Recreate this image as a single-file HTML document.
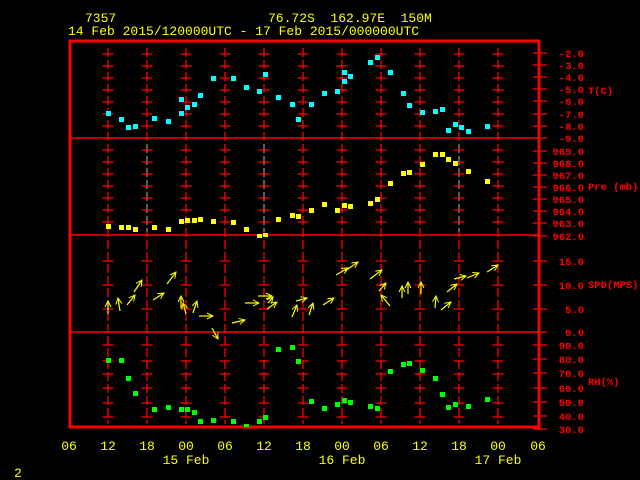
<!DOCTYPE html>
<html><head><style>
html,body{margin:0;padding:0;background:#000;width:640px;height:480px;overflow:hidden}
svg{display:block}
text{font-family:"Liberation Mono",monospace;font-size:13px}
.y{fill:#ffff00}.r{fill:#ff0000}
.s{font-size:10.5px;font-weight:bold}
</style></head><body>
<svg width="640" height="480" xmlns="http://www.w3.org/2000/svg">
<defs>
<marker id="ah" markerWidth="8" markerHeight="8" refX="7" refY="4" orient="auto" markerUnits="userSpaceOnUse">
<path d="M1,1 L7,4 L1,7" fill="none" stroke="#ffff00" stroke-width="1"/>
</marker>
</defs>
<!-- header -->
<text x="85" y="22" class="y">7357</text>
<text x="268" y="22" class="y" xml:space="preserve">76.72S  162.97E  150M</text>
<text x="68" y="35" class="y">14 Feb 2015/120000UTC - 17 Feb 2015/000000UTC</text>

<!-- vertical grid -->
<g stroke="#ff0000" stroke-width="1.3" stroke-dasharray="9,3">
<line x1="108" y1="48" x2="108" y2="424"/><line x1="147" y1="48" x2="147" y2="424"/>
<line x1="186" y1="48" x2="186" y2="424"/><line x1="225" y1="48" x2="225" y2="424"/>
<line x1="264" y1="48" x2="264" y2="424"/><line x1="303" y1="48" x2="303" y2="424"/>
<line x1="342" y1="48" x2="342" y2="424"/><line x1="381" y1="48" x2="381" y2="424"/>
<line x1="420" y1="48" x2="420" y2="424"/><line x1="459" y1="48" x2="459" y2="424"/>
<line x1="498" y1="48" x2="498" y2="424"/>
</g>
<g stroke="#808080" stroke-width="1.3" stroke-dasharray="9,3">
<line x1="147" y1="144" x2="147" y2="232"/><line x1="264" y1="144" x2="264" y2="232"/>
<line x1="459" y1="144" x2="459" y2="232"/>
</g>
<!-- cross ticks -->
<g stroke="#ff0000" stroke-width="1.3" stroke-dasharray="11,28">
<line x1="102.5" x2="510" y1="54" y2="54"/><line x1="102.5" x2="510" y1="66" y2="66"/>
<line x1="102.5" x2="510" y1="78" y2="78"/><line x1="102.5" x2="510" y1="90" y2="90"/>
<line x1="102.5" x2="510" y1="102" y2="102"/><line x1="102.5" x2="510" y1="114" y2="114"/>
<line x1="102.5" x2="510" y1="126" y2="126"/>
<line x1="102.5" x2="510" y1="150" y2="150"/><line x1="102.5" x2="510" y1="162" y2="162"/>
<line x1="102.5" x2="510" y1="174" y2="174"/><line x1="102.5" x2="510" y1="186" y2="186"/>
<line x1="102.5" x2="510" y1="198" y2="198"/><line x1="102.5" x2="510" y1="210" y2="210"/>
<line x1="102.5" x2="510" y1="222" y2="222"/>
<line x1="102.5" x2="510" y1="261" y2="261"/><line x1="102.5" x2="510" y1="285" y2="285"/>
<line x1="102.5" x2="510" y1="309" y2="309"/>
<line x1="102.5" x2="510" y1="345" y2="345"/><line x1="102.5" x2="510" y1="361" y2="361"/>
<line x1="102.5" x2="510" y1="374" y2="374"/><line x1="102.5" x2="510" y1="388" y2="388"/>
<line x1="102.5" x2="510" y1="403" y2="403"/><line x1="102.5" x2="510" y1="417" y2="417"/>
</g>
<!-- frame -->
<g stroke="#ff0000">
<rect x="70" y="41" width="469" height="386" fill="none" stroke-width="3"/>
<line x1="70" y1="138" x2="539" y2="138" stroke-width="1.5"/>
<line x1="70" y1="235" x2="539" y2="235" stroke-width="1.5"/>
<line x1="70" y1="332" x2="539" y2="332" stroke-width="1.5"/>
<line x1="539" y1="41" x2="539" y2="430" stroke-width="3"/>
</g>
<g stroke="#ff0000" stroke-width="1.3">
<line x1="533" x2="547" y1="53" y2="53"/><line x1="533" x2="547" y1="65" y2="65"/><line x1="533" x2="547" y1="77" y2="77"/><line x1="533" x2="547" y1="89" y2="89"/><line x1="533" x2="547" y1="101" y2="101"/><line x1="533" x2="547" y1="114" y2="114"/><line x1="533" x2="547" y1="126" y2="126"/><line x1="533" x2="547" y1="138" y2="138"/>
<line x1="533" x2="547" y1="151" y2="151"/><line x1="533" x2="547" y1="163" y2="163"/><line x1="533" x2="547" y1="175" y2="175"/><line x1="533" x2="547" y1="187" y2="187"/><line x1="533" x2="547" y1="199" y2="199"/><line x1="533" x2="547" y1="211" y2="211"/><line x1="533" x2="547" y1="223" y2="223"/><line x1="533" x2="547" y1="236" y2="236"/>
<line x1="533" x2="547" y1="261" y2="261"/><line x1="533" x2="547" y1="285" y2="285"/><line x1="533" x2="547" y1="309" y2="309"/><line x1="533" x2="547" y1="332" y2="332"/>
<line x1="533" x2="547" y1="345" y2="345"/><line x1="533" x2="547" y1="359" y2="359"/><line x1="533" x2="547" y1="373" y2="373"/><line x1="533" x2="547" y1="388" y2="388"/><line x1="533" x2="547" y1="402" y2="402"/><line x1="533" x2="547" y1="416" y2="416"/><line x1="533" x2="547" y1="429" y2="429"/>
</g>
<!-- right labels -->
<g class="r" text-anchor="end">
<text class="s" x="584" y="57">-2.0</text><text class="s" x="584" y="69">-3.0</text><text class="s" x="584" y="81">-4.0</text><text class="s" x="584" y="93">-5.0</text><text class="s" x="584" y="105">-6.0</text><text class="s" x="584" y="118">-7.0</text><text class="s" x="584" y="130">-8.0</text><text class="s" x="584" y="142">-9.0</text>
<text class="s" x="584" y="155">969.0</text><text class="s" x="584" y="167">968.0</text><text class="s" x="584" y="179">967.0</text><text class="s" x="584" y="191">966.0</text><text class="s" x="584" y="203">965.0</text><text class="s" x="584" y="215">964.0</text><text class="s" x="584" y="227">963.0</text><text class="s" x="584" y="240">962.0</text>
<text class="s" x="584" y="265">15.0</text><text class="s" x="584" y="289">10.0</text><text class="s" x="584" y="313">5.0</text><text class="s" x="584" y="336">0.0</text>
<text class="s" x="584" y="349">90.0</text><text class="s" x="584" y="363">80.0</text><text class="s" x="584" y="377">70.0</text><text class="s" x="584" y="392">60.0</text><text class="s" x="584" y="406">50.0</text><text class="s" x="584" y="420">40.0</text><text class="s" x="584" y="433">30.0</text>
</g>
<g class="r">
<text class="s" x="588" y="94">T(C)</text>
<text class="s" x="588" y="190">Pre (mb)</text>
<text class="s" x="588" y="288">SPD(MPS)</text>
<text class="s" x="588" y="385">RH(%)</text>
</g>
<!-- bottom labels -->
<g class="y" text-anchor="middle">
<text x="69" y="450">06</text><text x="108" y="450">12</text><text x="147" y="450">18</text><text x="186" y="450">00</text><text x="225" y="450">06</text><text x="264" y="450">12</text><text x="303" y="450">18</text><text x="342" y="450">00</text><text x="381" y="450">06</text><text x="420" y="450">12</text><text x="459" y="450">18</text><text x="498" y="450">00</text><text x="538" y="450">06</text>
<text x="186" y="464">15 Feb</text><text x="342" y="464">16 Feb</text><text x="498" y="464">17 Feb</text>
</g>
<text x="14" y="477" class="y">2</text>
<!-- temperature -->
<g fill="#00ffff">
<rect x="106" y="111" width="5" height="5"/><rect x="119" y="117" width="5" height="5"/><rect x="126" y="125" width="5" height="5"/><rect x="133" y="124" width="5" height="5"/><rect x="152" y="116" width="5" height="5"/><rect x="166" y="119" width="5" height="5"/><rect x="179" y="111" width="5" height="5"/><rect x="179" y="97" width="5" height="5"/><rect x="185" y="105" width="5" height="5"/><rect x="192" y="102" width="5" height="5"/><rect x="198" y="93" width="5" height="5"/><rect x="211" y="76" width="5" height="5"/><rect x="231" y="76" width="5" height="5"/><rect x="244" y="85" width="5" height="5"/><rect x="257" y="89" width="5" height="5"/><rect x="263" y="72" width="5" height="5"/><rect x="276" y="95" width="5" height="5"/><rect x="290" y="102" width="5" height="5"/><rect x="296" y="117" width="5" height="5"/><rect x="309" y="102" width="5" height="5"/><rect x="322" y="91" width="5" height="5"/><rect x="335" y="89" width="5" height="5"/><rect x="342" y="79" width="5" height="5"/><rect x="348" y="74" width="5" height="5"/><rect x="342" y="70" width="5" height="5"/><rect x="368" y="60" width="5" height="5"/><rect x="375" y="55" width="5" height="5"/><rect x="388" y="70" width="5" height="5"/><rect x="401" y="91" width="5" height="5"/><rect x="407" y="103" width="5" height="5"/><rect x="420" y="110" width="5" height="5"/><rect x="433" y="109" width="5" height="5"/><rect x="440" y="107" width="5" height="5"/><rect x="446" y="128" width="5" height="5"/><rect x="453" y="122" width="5" height="5"/><rect x="459" y="125" width="5" height="5"/><rect x="466" y="129" width="5" height="5"/><rect x="485" y="124" width="5" height="5"/>
</g>
<!-- pressure -->
<g fill="#ffff00">
<rect x="106" y="224" width="5" height="5"/><rect x="119" y="225" width="5" height="5"/><rect x="126" y="225" width="5" height="5"/><rect x="133" y="227" width="5" height="5"/><rect x="152" y="225" width="5" height="5"/><rect x="166" y="227" width="5" height="5"/><rect x="179" y="219" width="5" height="5"/><rect x="185" y="218" width="5" height="5"/><rect x="192" y="218" width="5" height="5"/><rect x="198" y="217" width="5" height="5"/><rect x="211" y="219" width="5" height="5"/><rect x="231" y="220" width="5" height="5"/><rect x="244" y="227" width="5" height="5"/><rect x="257" y="234" width="5" height="4"/><rect x="263" y="233" width="5" height="4"/><rect x="276" y="217" width="5" height="5"/><rect x="290" y="213" width="5" height="5"/><rect x="296" y="214" width="5" height="5"/><rect x="309" y="208" width="5" height="5"/><rect x="322" y="202" width="5" height="5"/><rect x="335" y="208" width="5" height="5"/><rect x="342" y="203" width="5" height="5"/><rect x="348" y="204" width="5" height="5"/><rect x="368" y="201" width="5" height="5"/><rect x="375" y="197" width="5" height="5"/><rect x="388" y="181" width="5" height="5"/><rect x="401" y="171" width="5" height="5"/><rect x="407" y="170" width="5" height="5"/><rect x="420" y="162" width="5" height="5"/><rect x="433" y="152" width="5" height="5"/><rect x="440" y="152" width="5" height="5"/><rect x="446" y="157" width="5" height="5"/><rect x="453" y="161" width="5" height="5"/><rect x="466" y="169" width="5" height="5"/><rect x="485" y="179" width="5" height="5"/>
</g>
<!-- RH -->
<g fill="#00ff00">
<rect x="106" y="358" width="5" height="5"/><rect x="119" y="358" width="5" height="5"/><rect x="126" y="376" width="5" height="5"/><rect x="133" y="391" width="5" height="5"/><rect x="152" y="407" width="5" height="5"/><rect x="166" y="405" width="5" height="5"/><rect x="179" y="407" width="5" height="5"/><rect x="185" y="407" width="5" height="5"/><rect x="192" y="410" width="5" height="5"/><rect x="198" y="419" width="5" height="5"/><rect x="211" y="418" width="5" height="5"/><rect x="231" y="419" width="5" height="5"/><rect x="244" y="424" width="5" height="3"/><rect x="257" y="419" width="5" height="5"/><rect x="263" y="415" width="5" height="5"/><rect x="276" y="347" width="5" height="5"/><rect x="290" y="345" width="5" height="5"/><rect x="296" y="359" width="5" height="5"/><rect x="309" y="399" width="5" height="5"/><rect x="322" y="406" width="5" height="5"/><rect x="335" y="402" width="5" height="5"/><rect x="342" y="398" width="5" height="5"/><rect x="348" y="400" width="5" height="5"/><rect x="368" y="404" width="5" height="5"/><rect x="375" y="406" width="5" height="5"/><rect x="388" y="369" width="5" height="5"/><rect x="401" y="362" width="5" height="5"/><rect x="407" y="361" width="5" height="5"/><rect x="420" y="368" width="5" height="5"/><rect x="433" y="376" width="5" height="5"/><rect x="440" y="392" width="5" height="5"/><rect x="446" y="405" width="5" height="5"/><rect x="453" y="402" width="5" height="5"/><rect x="466" y="404" width="5" height="5"/><rect x="485" y="397" width="5" height="5"/>
</g>
<!-- wind -->
<g stroke="#ffff00" stroke-width="1.2" marker-end="url(#ah)">
<line x1="108" y1="314" x2="108" y2="301"/><line x1="120" y1="311" x2="118" y2="298"/>
<line x1="127" y1="305" x2="135" y2="295"/><line x1="134" y1="292" x2="142" y2="280"/>
<line x1="153" y1="300" x2="164" y2="293"/><line x1="167" y1="284" x2="176" y2="272"/>
<line x1="181" y1="308" x2="181" y2="296"/><line x1="186" y1="314" x2="183" y2="303"/>
<line x1="193" y1="313" x2="197" y2="301"/><line x1="199" y1="316" x2="213" y2="316"/>
<line x1="212" y1="328" x2="218" y2="339"/><line x1="232" y1="323" x2="245" y2="320"/>
<line x1="245" y1="303" x2="259" y2="303"/><line x1="258" y1="296" x2="272" y2="296"/>
<line x1="267" y1="309" x2="277" y2="302"/><line x1="268" y1="303" x2="273" y2="297"/>
<line x1="292" y1="317" x2="297" y2="305"/><line x1="296" y1="301" x2="307" y2="298"/>
<line x1="309" y1="315" x2="313" y2="303"/><line x1="323" y1="305" x2="334" y2="298"/>
<line x1="336" y1="275" x2="348" y2="268"/><line x1="345" y1="271" x2="358" y2="262"/>
<line x1="370" y1="279" x2="382" y2="270"/><line x1="390" y1="306" x2="381" y2="295"/>
<line x1="379" y1="291" x2="386" y2="283"/><line x1="402" y1="298" x2="402" y2="286"/>
<line x1="408" y1="294" x2="408" y2="282"/><line x1="421" y1="294" x2="421" y2="282"/>
<line x1="435" y1="308" x2="436" y2="296"/><line x1="441" y1="310" x2="451" y2="302"/>
<line x1="447" y1="292" x2="457" y2="284"/><line x1="454" y1="279" x2="466" y2="276"/>
<line x1="467" y1="278" x2="479" y2="273"/><line x1="487" y1="272" x2="498" y2="265"/>
</g>
</svg>
</body></html>
